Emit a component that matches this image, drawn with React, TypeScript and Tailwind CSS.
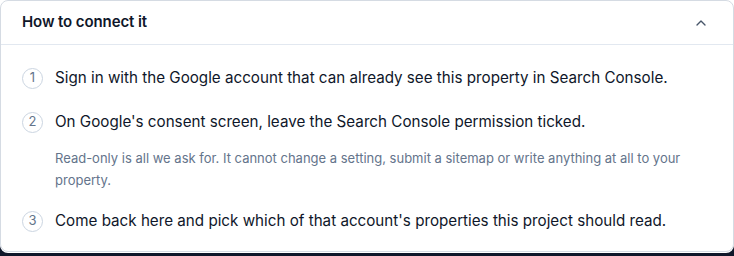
import React from 'react';

const steps = [
  {
    n: 1,
    text: 'Sign in with the Google account that can already see this property in Search Console.',
  },
  {
    n: 2,
    text: "On Google's consent screen, leave the Search Console permission ticked.",
    note: 'Read-only is all we ask for. It cannot change a setting, submit a sitemap or write anything at all to your property.',
  },
  {
    n: 3,
    text: "Come back here and pick which of that account's properties this project should read.",
  },
];

const App: React.FC = () => {
  return (
    <div className="w-[734px] h-[256px] bg-[#0f172a] font-['Inter',sans-serif]">
      <div className="h-[253px] bg-white rounded-b-lg">
        <div className="h-[252px] border border-[#d5dbe3] rounded-lg bg-white">
          <div className="h-[44px] flex items-center justify-between pl-[21px] pr-[24px] border-b border-[#e2e8f0]">
            <h3 className="text-[15px] font-semibold text-[#0f172a] tracking-[-0.1px]">How to connect it</h3>
            <svg xmlns="http://www.w3.org/2000/svg" className="w-4 h-4 text-[#475569]" fill="none" viewBox="0 0 24 24" stroke="currentColor">
              <path strokeLinecap="round" strokeLinejoin="round" strokeWidth={2} d="M6 15l6-6 6 6" />
            </svg>
          </div>
          <ol className="pt-[21px] pl-[21px] pr-6 flex flex-col gap-5">
            {steps.map((s) => (
              <li key={s.n}>
                <div className="flex items-center gap-[12px]">
                  <span className="w-[21px] h-[21px] rounded-full border border-[#cbd5e1] flex items-center justify-center text-[13px] text-[#64748b] shrink-0">
                    {s.n}
                  </span>
                  <span className="text-[15.2px] leading-6 text-[#0f172a]">{s.text}</span>
                </div>
                {s.note && (
                  <p className="mt-[13px] ml-[33px] mb-[-2px] text-[13px] leading-[22px] text-[#64748b]">{s.note}</p>
                )}
              </li>
            ))}
          </ol>
        </div>
      </div>
    </div>
  );
};

export default App;
